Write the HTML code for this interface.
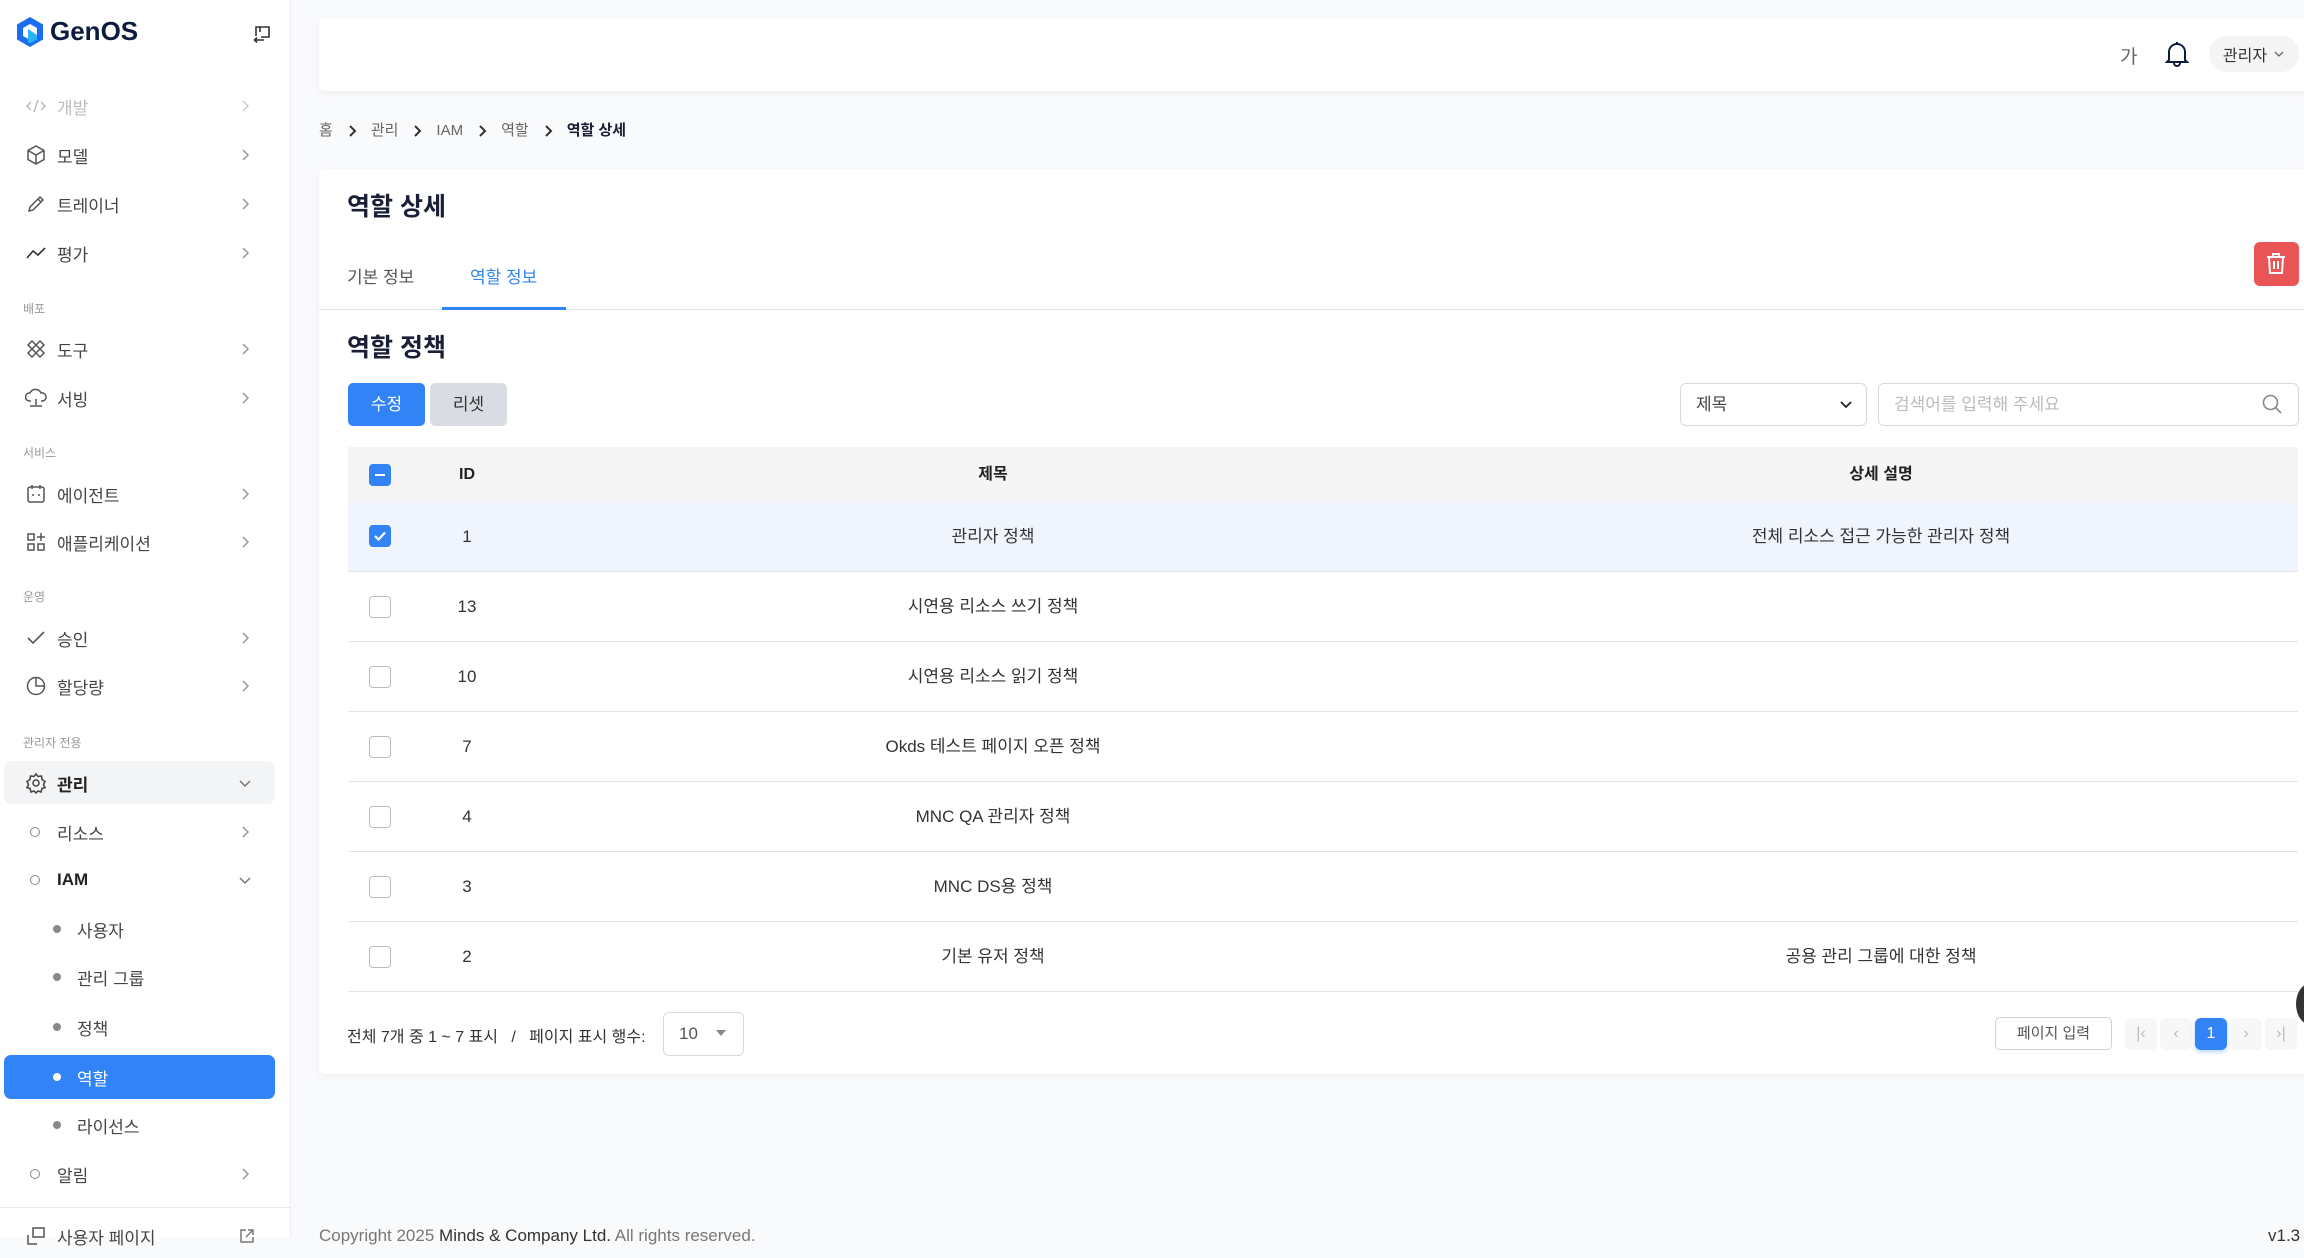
<!DOCTYPE html>
<html><head><meta charset="utf-8">
<style>
*{box-sizing:border-box;margin:0;padding:0}
body{width:2304px;height:1237px;overflow:hidden;background:#f9fafc;font-family:"Liberation Sans","Noto Sans CJK KR",sans-serif;color:#222;position:relative}
.abs{position:absolute}
#side{left:0;top:0;width:291px;height:1237px;background:#fff;border-right:1px solid #eceef2}
.it{position:absolute;left:0;width:291px;height:44px;display:flex;align-items:center;font-size:17px;color:#444}
.it svg.ic{position:absolute;left:25px;width:22px;height:22px}
.it .t{position:absolute;left:57px}
.it .ch{position:absolute;left:238px;width:14px;height:14px}
.sec{position:absolute;left:23px;font-size:12px;color:#999}
.sub .t{left:77px}
.dot{position:absolute;left:53px;width:8px;height:8px;border-radius:50%;background:#888}
.odot{position:absolute;left:30px;width:10px;height:10px;border-radius:50%;border:1.5px solid #888}
.card{background:#fff;border-radius:6px;box-shadow:0 2px 8px rgba(0,0,0,.05)}
.row{position:absolute;left:348px;width:1950px;height:70px;border-bottom:1px solid #e2e4e8;font-size:17px;color:#333}
.row span{position:absolute;top:0;line-height:70px;transform:translateX(-50%);white-space:nowrap}
.cb{position:absolute;left:369px;width:22px;height:22px;border:1.5px solid #bbb;border-radius:4px;background:#fff}
.cb.on{background:#3183f6;border-color:#3183f6}
.pb{position:absolute;top:1018px;width:32px;height:32px;border-radius:6px;background:#f7f7f8;color:#bbb;font-size:16px;text-align:center;line-height:32px}
.hd{position:absolute;top:447px;height:55px;line-height:55px;font-size:16px;font-weight:bold;transform:translateX(-50%);white-space:nowrap}
.bc{display:inline-block;vertical-align:middle;margin:0 14px}
</style></head><body>
<div id="side" class="abs">
  <svg class="abs" style="left:15px;top:16px" width="30" height="32" viewBox="0 0 30 32"><path d="M15 1 L28 8.5 V23.5 L15 31 L2 23.5 V8.5 Z" fill="#1a6df0"/><path d="M15 8 L22 12 V20 L15 24 L8 20 V12 Z" fill="#fff"/><path d="M13 13 L22 19 L22 23.5 L15 27.5 L13 26 Z" fill="#28b5f5"/></svg>
  <div class="abs" style="left:50px;top:16px;font-size:26px;font-weight:bold;color:#0d1b3e">GenOS</div>
  <svg class="abs" style="left:252px;top:24px" width="20" height="20" viewBox="0 0 20 20" fill="none" stroke="#333" stroke-width="1.6"><path d="M4 12 V3 H17 V13 H9"/><path d="M3 16 H12 M5 13.5 L2.5 16 L5 18.5"/><path d="M8 3 V8"/></svg>

  <div class="it" style="top:84px;color:#bbb"><svg class="ic" viewBox="0 0 22 22" fill="none" stroke="#bbb" stroke-width="1.5"><path d="M6 7 L2 11 L6 15 M16 7 L20 11 L16 15 M13 5 L9 17"/></svg><span class="t">개발</span><svg class="ch" viewBox="0 0 14 14" fill="none" stroke="#ccc" stroke-width="1.5"><path d="M5 2 L10 7 L5 12"/></svg></div>
  <div class="it" style="top:133px"><svg class="ic" viewBox="0 0 22 22" fill="none" stroke="#555" stroke-width="1.5"><path d="M11 2 L19 6.5 V15.5 L11 20 L3 15.5 V6.5 Z M3 6.5 L11 11 L19 6.5 M11 11 V20"/></svg><span class="t">모델</span><svg class="ch" viewBox="0 0 14 14" fill="none" stroke="#999" stroke-width="1.5"><path d="M5 2 L10 7 L5 12"/></svg></div>
  <div class="it" style="top:182px"><svg class="ic" viewBox="0 0 22 22" fill="none" stroke="#555" stroke-width="1.5"><path d="M4 18 L5 14 L15 4 L18 7 L8 17 Z M13 6 L16 9"/></svg><span class="t">트레이너</span><svg class="ch" viewBox="0 0 14 14" fill="none" stroke="#999" stroke-width="1.5"><path d="M5 2 L10 7 L5 12"/></svg></div>
  <div class="it" style="top:231px"><svg class="ic" viewBox="0 0 22 22" fill="none" stroke="#333" stroke-width="1.6"><path d="M2 16 L8 9 L13 13 L20 6"/></svg><span class="t">평가</span><svg class="ch" viewBox="0 0 14 14" fill="none" stroke="#999" stroke-width="1.5"><path d="M5 2 L10 7 L5 12"/></svg></div>
  <div class="sec" style="top:300px">배포</div>
  <div class="it" style="top:327px"><svg class="ic" viewBox="0 0 22 22" fill="none" stroke="#555" stroke-width="1.5"><path d="M3 15 L15 3 L19 7 L7 19 Z M3 7 L7 3 L19 15 L15 19 Z"/></svg><span class="t">도구</span><svg class="ch" viewBox="0 0 14 14" fill="none" stroke="#999" stroke-width="1.5"><path d="M5 2 L10 7 L5 12"/></svg></div>
  <div class="it" style="top:376px"><svg class="ic" viewBox="0 0 22 22" fill="none" stroke="#555" stroke-width="1.5"><path d="M6 14 H4 A4 4 0 0 1 5 6 A6 6 0 0 1 16 6 A4 4 0 0 1 18 14 H16 M11 12 V18 M5 19 H17"/></svg><span class="t">서빙</span><svg class="ch" viewBox="0 0 14 14" fill="none" stroke="#999" stroke-width="1.5"><path d="M5 2 L10 7 L5 12"/></svg></div>
  <div class="sec" style="top:444px">서비스</div>
  <div class="it" style="top:472px"><svg class="ic" viewBox="0 0 22 22" fill="none" stroke="#555" stroke-width="1.5"><rect x="3" y="4" width="16" height="15" rx="2"/><path d="M7 2 V6 M15 2 V6 M7 12 H9 M13 12 H15"/></svg><span class="t">에이전트</span><svg class="ch" viewBox="0 0 14 14" fill="none" stroke="#999" stroke-width="1.5"><path d="M5 2 L10 7 L5 12"/></svg></div>
  <div class="it" style="top:520px"><svg class="ic" viewBox="0 0 22 22" fill="none" stroke="#555" stroke-width="1.5"><rect x="3" y="3" width="6" height="6"/><rect x="3" y="13" width="6" height="6"/><rect x="13" y="13" width="6" height="6"/><path d="M16 2 V10 M12 6 H20"/></svg><span class="t">애플리케이션</span><svg class="ch" viewBox="0 0 14 14" fill="none" stroke="#999" stroke-width="1.5"><path d="M5 2 L10 7 L5 12"/></svg></div>
  <div class="sec" style="top:588px">운영</div>
  <div class="it" style="top:616px"><svg class="ic" viewBox="0 0 22 22" fill="none" stroke="#555" stroke-width="1.6"><path d="M3 11 L8 16 L19 5"/></svg><span class="t">승인</span><svg class="ch" viewBox="0 0 14 14" fill="none" stroke="#999" stroke-width="1.5"><path d="M5 2 L10 7 L5 12"/></svg></div>
  <div class="it" style="top:664px"><svg class="ic" viewBox="0 0 22 22" fill="none" stroke="#555" stroke-width="1.5"><circle cx="11" cy="11" r="8.5"/><path d="M11 2.5 V11 H19.5"/></svg><span class="t">할당량</span><svg class="ch" viewBox="0 0 14 14" fill="none" stroke="#999" stroke-width="1.5"><path d="M5 2 L10 7 L5 12"/></svg></div>
  <div class="sec" style="top:734px">관리자 전용</div>
  <div class="abs" style="left:4px;top:761px;width:271px;height:43px;background:#f3f4f6;border-radius:8px"></div>
  <div class="it" style="top:761px;color:#222;font-weight:bold"><svg class="ic" viewBox="0 0 22 22" fill="none" stroke="#444" stroke-width="1.5"><circle cx="11" cy="11" r="3"/><path d="M11 2 L13 4.5 L16.5 4 L17 7.5 L20 9.5 L18.5 12.5 L20 15.5 L17 16.5 L16 20 L13 19 L11 21 L9 19 L6 20 L5 16.5 L2 15.5 L3.5 12.5 L2 9.5 L5 7.5 L5.5 4 L9 4.5 Z"/></svg><span class="t">관리</span><svg class="ch" viewBox="0 0 14 14" fill="none" stroke="#777" stroke-width="1.5"><path d="M2 5 L7 10 L12 5"/></svg></div>
  <div class="it" style="top:810px"><span class="odot" style="top:17px"></span><span class="t">리소스</span><svg class="ch" viewBox="0 0 14 14" fill="none" stroke="#999" stroke-width="1.5"><path d="M5 2 L10 7 L5 12"/></svg></div>
  <div class="it" style="top:858px;color:#222;font-weight:bold"><span class="odot" style="top:17px"></span><span class="t">IAM</span><svg class="ch" viewBox="0 0 14 14" fill="none" stroke="#777" stroke-width="1.5"><path d="M2 5 L7 10 L12 5"/></svg></div>
  <div class="it sub" style="top:907px"><span class="dot" style="top:18px"></span><span class="t">사용자</span></div>
  <div class="it sub" style="top:955px"><span class="dot" style="top:18px"></span><span class="t">관리 그룹</span></div>
  <div class="it sub" style="top:1005px"><span class="dot" style="top:18px"></span><span class="t">정책</span></div>
  <div class="abs" style="left:4px;top:1055px;width:271px;height:44px;background:#3183f6;border-radius:7px"></div>
  <div class="it sub" style="top:1055px;color:#fff"><span class="dot" style="top:18px;background:#fff"></span><span class="t">역할</span></div>
  <div class="it sub" style="top:1103px"><span class="dot" style="top:18px"></span><span class="t">라이선스</span></div>
  <div class="it" style="top:1152px"><span class="odot" style="top:17px"></span><span class="t">알림</span><svg class="ch" viewBox="0 0 14 14" fill="none" stroke="#999" stroke-width="1.5"><path d="M5 2 L10 7 L5 12"/></svg></div>
  <div class="abs" style="left:0;top:1207px;width:291px;height:1px;background:#e6e7ea"></div>
  <div class="it" style="top:1214px"><svg class="ic" viewBox="0 0 22 22" fill="none" stroke="#555" stroke-width="1.5"><rect x="8" y="3" width="11" height="9"/><path d="M3 10 V19 H12"/></svg><span class="t">사용자 페이지</span><svg class="ch" style="width:18px;height:18px" viewBox="0 0 18 18" fill="none" stroke="#777" stroke-width="1.5"><path d="M8 3 H3 V15 H15 V10 M10 3 H15 V8 M15 3 L8 10"/></svg></div>
</div>

<!-- header -->
<div class="abs card" style="left:319px;top:18px;width:1990px;height:73px"></div>
<div class="abs" style="left:2120px;top:42px;font-size:19px;color:#666">가</div>
<svg class="abs" style="left:2164px;top:40px" width="26" height="28" viewBox="0 0 26 28" fill="none" stroke="#0d1b3e" stroke-width="2"><path d="M5 20 V12 A8 8 0 0 1 21 12 V20 L23 22 H3 Z M10 23 A3 3 0 0 0 16 23 M13 2 V4"/></svg>
<div class="abs" style="left:2209px;top:36px;width:90px;height:36px;border-radius:18px;background:#f4f4f5;font-size:16px;color:#333;display:flex;align-items:center;justify-content:center;gap:6px">관리자 <svg width="12" height="12" viewBox="0 0 12 12" fill="none" stroke="#666" stroke-width="1.3"><path d="M2 4 L6 8 L10 4"/></svg></div>

<!-- breadcrumb -->
<div class="abs" style="left:319px;top:120px;font-size:15px;color:#666;white-space:nowrap;line-height:22px">홈<svg class="bc" width="10" height="14" viewBox="0 0 10 14" fill="none" stroke="#333" stroke-width="2"><path d="M3 2 L8 7 L3 12"/></svg>관리<svg class="bc" width="10" height="14" viewBox="0 0 10 14" fill="none" stroke="#333" stroke-width="2"><path d="M3 2 L8 7 L3 12"/></svg>IAM<svg class="bc" width="10" height="14" viewBox="0 0 10 14" fill="none" stroke="#333" stroke-width="2"><path d="M3 2 L8 7 L3 12"/></svg>역할<svg class="bc" width="10" height="14" viewBox="0 0 10 14" fill="none" stroke="#333" stroke-width="2"><path d="M3 2 L8 7 L3 12"/></svg><b style="color:#1a1f36">역할 상세</b></div>

<!-- main card -->
<div class="abs card" style="left:319px;top:169px;width:1990px;height:905px"></div>
<div class="abs" style="left:347px;top:187px;font-size:25px;font-weight:bold;color:#1a1f36">역할 상세</div>
<div class="abs" style="left:347px;top:263px;font-size:17px;color:#555">기본 정보</div>
<div class="abs" style="left:470px;top:263px;font-size:17px;color:#3183f6">역할 정보</div>
<div class="abs" style="left:319px;top:309px;width:1990px;height:1px;background:#e3e4e8"></div>
<div class="abs" style="left:442px;top:307px;width:124px;height:3px;background:#3183f6"></div>
<div class="abs" style="left:2254px;top:242px;width:45px;height:44px;border-radius:6px;background:#e95456"></div>
<svg class="abs" style="left:2264px;top:251px" width="24" height="26" viewBox="0 0 24 26" fill="none" stroke="#fff" stroke-width="2"><path d="M3 6 H21 M9 6 V3 H15 V6 M5 6 L6 22 H18 L19 6 M10 10 V18 M14 10 V18"/></svg>

<div class="abs" style="left:347px;top:328px;font-size:25px;font-weight:bold;color:#1a1f36">역할 정책</div>
<div class="abs" style="left:348px;top:383px;width:77px;height:43px;border-radius:5px;background:#3183f6;color:#fff;font-size:17px;text-align:center;line-height:43px">수정</div>
<div class="abs" style="left:430px;top:383px;width:77px;height:43px;border-radius:5px;background:#d9dde3;color:#333;font-size:17px;text-align:center;line-height:43px">리셋</div>
<div class="abs" style="left:1680px;top:383px;width:187px;height:43px;border:1px solid #d8d9dc;border-radius:6px;font-size:17px;color:#444;line-height:41px;padding-left:15px">제목</div>
<svg class="abs" style="left:1838px;top:397px" width="16" height="16" viewBox="0 0 16 16" fill="none" stroke="#222" stroke-width="1.8"><path d="M3 5 L8 10 L13 5"/></svg>
<div class="abs" style="left:1878px;top:383px;width:421px;height:43px;border:1px solid #d8d9dc;border-radius:6px;font-size:17px;color:#bbb;line-height:41px;padding-left:15px">검색어를 입력해 주세요</div>
<svg class="abs" style="left:2261px;top:393px" width="22" height="22" viewBox="0 0 22 22" fill="none" stroke="#888" stroke-width="1.6"><circle cx="9.5" cy="9.5" r="7"/><path d="M14.5 14.5 L20 20"/></svg>

<!-- table -->
<div class="abs" style="left:348px;top:447px;width:1950px;height:55px;background:#f5f5f6"></div>
<div class="cb on" style="top:464px"></div><div class="abs" style="left:375px;top:474px;width:10px;height:2px;background:#fff"></div>
<div class="hd" style="left:467px">ID</div>
<div class="hd" style="left:993px">제목</div>
<div class="hd" style="left:1881px">상세 설명</div>

<div class="row" style="top:502px;background:#eff4fd"><span style="left:119px">1</span><span style="left:645px">관리자 정책</span><span style="left:1533px">전체 리소스 접근 가능한 관리자 정책</span></div>
<div class="cb on" style="top:525px"></div><svg class="abs" style="left:373px;top:530px" width="14" height="12" viewBox="0 0 14 12" fill="none" stroke="#fff" stroke-width="2.2"><path d="M2 6 L5.5 9.5 L12 2.5"/></svg>
<div class="row" style="top:572px"><span style="left:119px">13</span><span style="left:645px">시연용 리소스 쓰기 정책</span></div><div class="cb" style="top:596px"></div>
<div class="row" style="top:642px"><span style="left:119px">10</span><span style="left:645px">시연용 리소스 읽기 정책</span></div><div class="cb" style="top:666px"></div>
<div class="row" style="top:712px"><span style="left:119px">7</span><span style="left:645px">Okds 테스트 페이지 오픈 정책</span></div><div class="cb" style="top:736px"></div>
<div class="row" style="top:782px"><span style="left:119px">4</span><span style="left:645px">MNC QA 관리자 정책</span></div><div class="cb" style="top:806px"></div>
<div class="row" style="top:852px"><span style="left:119px">3</span><span style="left:645px">MNC DS용 정책</span></div><div class="cb" style="top:876px"></div>
<div class="row" style="top:922px"><span style="left:119px">2</span><span style="left:645px">기본 유저 정책</span><span style="left:1533px">공용 관리 그룹에 대한 정책</span></div><div class="cb" style="top:946px"></div>

<!-- footer of card -->
<div class="abs" style="left:347px;top:1023px;font-size:16px;color:#333;white-space:nowrap">전체 7개 중 1 ~ 7 표시 &nbsp;&nbsp;/&nbsp;&nbsp; 페이지 표시 행수:</div>
<div class="abs" style="left:663px;top:1012px;width:81px;height:44px;border:1px solid #d8d9dc;border-radius:6px;font-size:17px;color:#555;line-height:42px;padding-left:15px">10</div>
<svg class="abs" style="left:716px;top:1029px" width="10" height="8" viewBox="0 0 10 8"><path d="M0 1 H10 L5 7 Z" fill="#888"/></svg>
<div class="abs" style="left:1995px;top:1017px;width:117px;height:33px;border:1px solid #d0d1d4;border-radius:5px;font-size:15px;color:#555;text-align:center;line-height:31px">페이지 입력</div>
<div class="pb" style="left:2125px">|‹</div>
<div class="pb" style="left:2160px">‹</div>
<div class="pb" style="left:2195px;background:#3183f6;color:#fff;box-shadow:0 2px 5px rgba(49,131,246,.35)">1</div>
<div class="pb" style="left:2230px">›</div>
<div class="pb" style="left:2265px">›|</div>
<div class="abs" style="left:2296px;top:983px;width:30px;height:42px;border-radius:50%;background:#333"></div>

<div class="abs" style="left:319px;top:1226px;font-size:17px;color:#777;white-space:nowrap">Copyright 2025 <span style="color:#333">Minds &amp; Company Ltd.</span> All rights reserved.</div>
<div class="abs" style="left:2268px;top:1226px;font-size:17px;color:#333">v1.3</div>
</body></html>
